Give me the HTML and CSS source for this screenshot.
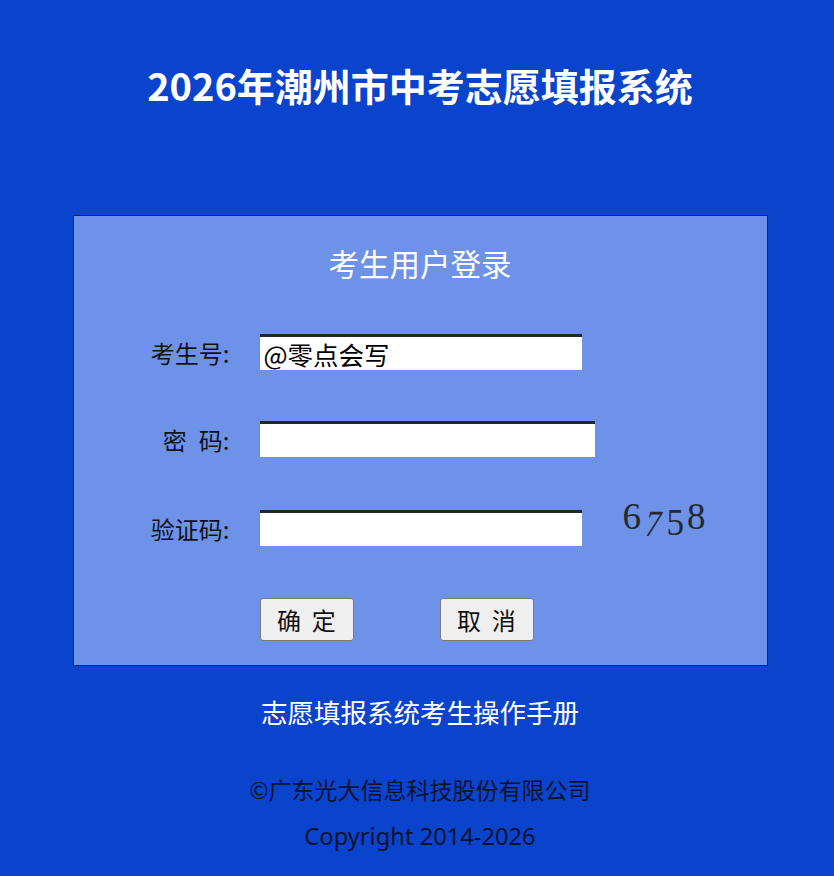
FILE: index.html
```html
<!DOCTYPE html>
<html lang="zh-CN">
<head>
<meta charset="utf-8">
<title>2026年潮州市中考志愿填报系统</title>
<link rel="stylesheet" href="styles.css">
</head>
<body>
<div class="page">
  <h1 class="site-title">2026年潮州市中考志愿填报系统</h1>
  <div class="panel">
    <div class="panel-title">考生用户登录</div>
    <div class="row">
      <label class="label">考生号:</label>
      <input class="field field-a" type="text" value="@零点会写">
    </div>
    <div class="row">
      <label class="label">密&ensp;码:</label>
      <input class="field field-b" type="password" value="">
    </div>
    <div class="row">
      <label class="label">验证码:</label>
      <input class="field field-a" type="text" value="">
      <div class="captcha"><span class="d1">6</span><span class="d2">7</span><span class="d3">5</span><span class="d4">8</span></div>
    </div>
    <div class="row buttons">
      <button class="btn">确&nbsp;&nbsp;定</button>
      <button class="btn">取&nbsp;&nbsp;消</button>
    </div>
  </div>
  <div class="manual">志愿填报系统考生操作手册</div>
  <div class="company">©广东光大信息科技股份有限公司</div>
  <div class="copyright">Copyright 2014-2026</div>
</div>
</body>
</html>
```
FILE: styles.css
```css
html, body {
  margin: 0;
  padding: 0;
  background: #0a43cc;
}
body {
  font-family: "Noto Sans", "Noto Sans CJK SC", sans-serif;
}
.page {
  padding-left: 6px;
  height: 876px;
  overflow: hidden;
}
.site-title {
  margin: 0;
  padding-top: 60px;
  height: 50px;
  line-height: 50px;
  text-align: center;
  color: #ffffff;
  font-size: 38px;
  font-weight: 700;
  font-family: "Noto Sans CJK SC", sans-serif;
}
.panel {
  width: 693px;
  margin: 105px auto 0;
  background: #6d92e8;
  border: 1px solid #1c2750;
  padding: 27px 0 24px;
}
.panel-title {
  text-align: center;
  color: #ffffff;
  font-size: 30.5px;
  line-height: 40px;
  height: 40px;
  font-family: "Noto Sans CJK SC", sans-serif;
}
.row {
  display: flex;
  align-items: center;
  margin-top: 51px;
  height: 36px;
}
.row + .row {
  margin-top: 51px;
}
.row:nth-child(4) {
  margin-top: 53px;
}
.label {
  width: 156px;
  text-align: right;
  font-size: 24px;
  color: #111318;
  margin-right: 30px;
  font-family: "Noto Sans CJK SC", sans-serif;
}
.field {
  box-sizing: border-box;
  height: 36px;
  border: none;
  border-top: 3px solid #222630;
  background: #ffffff;
  padding: 0 4px;
  margin: 0;
  font-size: 25.5px;
  color: #000;
  font-family: "Noto Sans CJK SC", sans-serif;
  outline: none;
}
.field-a { width: 322px; }
.field-b { width: 335px; }
.captcha {
  margin-left: 41px;
  margin-top: -22px;
  font-family: "Liberation Serif", serif;
  font-size: 37px;
  color: #26282e;
  display: flex;
  letter-spacing: 3px;
}
.captcha span { display: inline-block; }
.captcha .d1 { transform: translateY(-1px); }
.captcha .d2 { transform: translateY(6px) skewX(-12deg) scaleX(0.85); }
.captcha .d3 { transform: translateY(5px) scaleX(0.95); }
.captcha .d4 { transform: translateY(-1px); }
.buttons {
  height: 43px;
  margin-top: 52px !important;
  padding-left: 186px;
  gap: 86px;
}
.btn {
  box-sizing: border-box;
  width: 94px;
  height: 43px;
  background: #efefef;
  border: 1px solid #7a7a7a;
  border-radius: 3px;
  font-size: 24px;
  color: #111;
  font-family: "Noto Sans CJK SC", sans-serif;
  padding: 0;
}
.manual {
  text-align: center;
  color: #ffffff;
  font-size: 26.5px;
  line-height: 36px;
  margin-top: 28px;
  font-family: "Noto Sans CJK SC", sans-serif;
}
.company {
  text-align: center;
  color: #0c1230;
  font-size: 23px;
  line-height: 34px;
  margin-top: 42px;
  font-family: "Noto Sans CJK SC", sans-serif;
}
.copyright {
  text-align: center;
  color: #0c1230;
  font-size: 23.7px;
  line-height: 34px;
  margin-top: 13px;
  font-family: "Noto Sans", sans-serif;
}
```
